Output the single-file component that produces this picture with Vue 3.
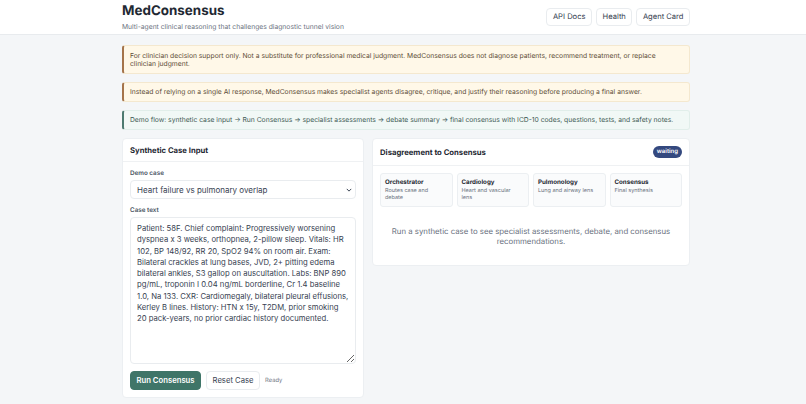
<template>
  <div class="page">
    <header class="topbar">
      <div class="topbar-inner">
        <div>
          <h1>MedConsensus</h1>
          <p class="subtitle">Multi-agent clinical reasoning that challenges diagnostic tunnel vision</p>
        </div>
        <nav class="links">
          <a v-for="link in links" :key="link" class="link">{{ link }}</a>
        </nav>
      </div>
    </header>

    <main class="content">
      <div class="notice warn">
        For clinician decision support only. Not a substitute for professional medical judgment. MedConsensus does not diagnose patients, recommend treatment, or replace clinician judgment.
      </div>
      <div class="notice warn">
        Instead of relying on a single AI response, MedConsensus makes specialist agents disagree, critique, and justify their reasoning before producing a final answer.
      </div>
      <div class="notice flow">
        Demo flow: synthetic case input → Run Consensus → specialist assessments → debate summary → final consensus with ICD-10 codes, questions, tests, and safety notes.
      </div>

      <div class="columns">
        <section class="panel input-panel">
          <div class="panel-head">
            <h2>Synthetic Case Input</h2>
          </div>
          <div class="panel-body">
            <label class="field-label" for="demo-case">Demo case</label>
            <div class="select-wrap">
              <select id="demo-case" class="control select">
                <option>Heart failure vs pulmonary overlap</option>
              </select>
              <svg class="chevron" viewBox="0 0 8 5" width="6" height="4" aria-hidden="true">
                <path d="M1 1l3 3 3-3" fill="none" stroke="#374151" stroke-width="1.3" />
              </svg>
            </div>
            <label class="field-label second" for="case-text">Case text</label>
            <textarea id="case-text" class="control case-text" v-model="caseText"></textarea>
            <div class="actions">
              <button type="button" class="btn primary">Run Consensus</button>
              <button type="button" class="btn">Reset Case</button>
              <span class="status">Ready</span>
            </div>
          </div>
        </section>

        <section class="panel result-panel">
          <div class="panel-head spaced">
            <h2>Disagreement to Consensus</h2>
            <span class="badge">waiting</span>
          </div>
          <div class="panel-body">
            <div class="agents">
              <div v-for="agent in agents" :key="agent.name" class="agent">
                <strong>{{ agent.name }}</strong>
                <span>{{ agent.lens }}</span>
              </div>
            </div>
            <p class="empty">Run a synthetic case to see specialist assessments, debate, and consensus recommendations.</p>
          </div>
        </section>
      </div>
    </main>
  </div>
</template>

<script setup>
import { ref } from 'vue'

const links = ['API Docs', 'Health', 'Agent Card']

const agents = [
  { name: 'Orchestrator', lens: 'Routes case and debate' },
  { name: 'Cardiology', lens: 'Heart and vascular lens' },
  { name: 'Pulmonology', lens: 'Lung and airway lens' },
  { name: 'Consensus', lens: 'Final synthesis' }
]

const caseText = ref('Patient: 58F. Chief complaint: Progressively worsening dyspnea x 3 weeks, orthopnea, 2-pillow sleep. Vitals: HR 102, BP 148/92, RR 20, SpO2 94% on room air. Exam: Bilateral crackles at lung bases, JVD, 2+ pitting edema bilateral ankles, S3 gallop on auscultation. Labs: BNP 890 pg/mL, troponin I 0.04 ng/mL borderline, Cr 1.4 baseline 1.0, Na 133. CXR: Cardiomegaly, bilateral pleural effusions, Kerley B lines. History: HTN x 15y, T2DM, prior smoking 20 pack-years, no prior cardiac history documented.')
</script>

<style>
html, body {
  margin: 0;
  background: #f4f6f8;
  overflow: hidden;
}
</style>

<style scoped>
.page {
  min-height: 404px;
  background: #f4f6f8;
  color: #1f2933;
  font-family: Inter, "Liberation Sans", sans-serif;
  text-rendering: geometricPrecision;
}

.topbar {
  height: 34px;
  background: #ffffff;
  border-bottom: 1px solid #e8ebee;
}

.topbar-inner {
  width: 568px;
  height: 100%;
  margin-left: 122px;
  display: flex;
  align-items: center;
  justify-content: space-between;
}

h1 {
  margin: -1px 0 0;
  font-size: 13.4px;
  line-height: 16px;
  font-weight: 700;
  color: #1f2933;
}

.subtitle {
  margin: 3px 0 0;
  font-size: 6.75px;
  line-height: 9px;
  color: #6b7280;
}

.links {
  display: flex;
  gap: 4px;
}

.link {
  height: 16px;
  padding: 0 5.5px;
  border: 1px solid #e9ecef;
  border-radius: 4px;
  background: #ffffff;
  font-size: 7.6px;
  line-height: 16px;
  color: #374151;
}

.content {
  width: 568px;
  margin-left: 122px;
  padding-top: 10px;
}

.notice {
  box-sizing: border-box;
  margin-bottom: 8px;
  padding: 5px 7px 4px 6px;
  min-height: 20px;
  border: 1px solid #f4e8cf;
  border-left: 2px solid #a5744a;
  border-radius: 3px;
  background: #fff8e8;
  font-size: 6.75px;
  line-height: 8.5px;
  color: #5c4c36;
}

.notice:first-child {
  padding-top: 5.5px;
  padding-bottom: 4.5px;
}

.notice.flow {
  border-color: #e1eeea;
  border-left-color: #4c7a70;
  background: #f1f8f6;
  color: #3f5a55;
}

.columns {
  display: grid;
  grid-template-columns: 242px 318px;
  gap: 8px;
  align-items: start;
}

.panel {
  box-sizing: border-box;
  border: 1px solid #eceff2;
  border-radius: 4px;
  background: #ffffff;
}

.panel-head {
  height: 22px;
  padding: 0 7px;
  display: flex;
  align-items: center;
  border-bottom: 1px solid #eff1f3;
}

.panel-head.spaced {
  height: 26px;
  justify-content: space-between;
}

h2 {
  margin: 0;
  font-size: 7.7px;
  font-weight: 700;
  color: #1f2933;
}

.panel-body {
  padding: 7px;
}

.field-label {
  display: block;
  margin-bottom: 3px;
  font-size: 6.3px;
  line-height: 8px;
  font-weight: 600;
  color: #4b5563;
}

.field-label.second {
  margin-top: 7px;
}

.control {
  display: block;
  width: 100%;
  box-sizing: border-box;
  border: 1px solid #e9ecef;
  border-radius: 4px;
  background: #ffffff;
  color: #374151;
  font-family: inherit;
  font-size: 8px;
}

.select-wrap {
  position: relative;
}

.select {
  height: 19px;
  padding: 0 6px;
  appearance: none;
}

.chevron {
  position: absolute;
  right: 4px;
  top: 8px;
}

.case-text {
  height: 147px;
  padding: 5px 5px 5px 6px;
  font-size: 7.7px;
  line-height: 11.3px;
  outline: none;
}

.actions {
  display: flex;
  align-items: center;
  gap: 5px;
  margin-top: 7px;
}

.btn {
  height: 19px;
  padding: 0 5.5px;
  border: 1px solid #e9ecef;
  border-radius: 4px;
  background: #ffffff;
  color: #374151;
  font-family: inherit;
  font-size: 7.7px;
}

.btn.primary {
  border-color: #3f7568;
  background: #3f7568;
  color: #ffffff;
  font-weight: 600;
}

.status {
  font-size: 5.8px;
  color: #6b7280;
}

.badge {
  height: 12px;
  padding: 0 4px;
  border-radius: 6px;
  background: #34497f;
  color: #ffffff;
  font-size: 6px;
  line-height: 12px;
  font-weight: 600;
}

.agents {
  display: grid;
  grid-template-columns: repeat(4, 1fr);
  gap: 4px;
}

.agent {
  box-sizing: border-box;
  min-height: 34px;
  padding: 4px 6px 4px 4px;
  border: 1px solid #eceff2;
  border-radius: 3px;
  background: #fafbfc;
}

.agent strong {
  display: block;
  font-size: 6.2px;
  line-height: 9px;
  font-weight: 700;
  color: #1f2933;
}

.agent span {
  display: block;
  margin-top: 1px;
  font-size: 5.5px;
  line-height: 7px;
  color: #6b7280;
}

.empty {
  margin: 20px 8px 12px;
  text-align: center;
  font-size: 7.8px;
  line-height: 9.5px;
  color: #6b7280;
}
</style>
